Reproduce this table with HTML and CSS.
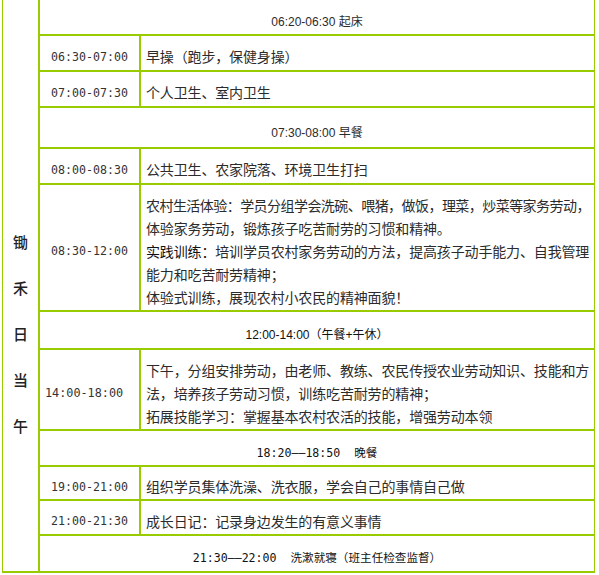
FILE: index.html
```html
<!DOCTYPE html>
<html lang="zh">
<head>
<meta charset="utf-8">
<title>锄禾日当午 日程安排</title>
<link rel="stylesheet" href="styles.css">
</head>
<body>
<div class="schedule">
  <div class="label">锄<br>禾<br>日<br>当<br>午</div>

  <div class="banner sans">06:20-06:30 起床</div>

  <div class="time">06:30-07:00</div>
  <div class="desc">早操（跑步，保健身操）</div>

  <div class="time">07:00-07:30</div>
  <div class="desc">个人卫生、室内卫生</div>

  <div class="banner sans">07:30-08:00 早餐</div>

  <div class="time">08:00-08:30</div>
  <div class="desc">公共卫生、农家院落、环境卫生打扫</div>

  <div class="time">08:30-12:00</div>
  <div class="desc"><div class="lines"><span class="tight">农村生活体验：学员分组学会洗碗、喂猪，做饭，理菜，炒菜等家务劳动，</span><br>体验家务劳动，锻炼孩子吃苦耐劳的习惯和精神。<br><span class="dark">实践训练：</span>培训学员农村家务劳动的方法，提高孩子动手能力、自我管理<br>能力和吃苦耐劳精神；<br>体验式训练，展现农村小农民的精神面貌！</div></div>

  <div class="banner sans dark">12:00-14:00（午餐+午休）</div>

  <div class="time left">14:00-18:00</div>
  <div class="desc"><div class="lines">下午，分组安排劳动，由老师、教练、农民传授农业劳动知识、技能和方<br>法，培养孩子劳动习惯，训练吃苦耐劳的精神；<br>拓展技能学习：掌握基本农村农活的技能，增强劳动本领</div></div>

  <div class="banner mono dark">18:20——18:50&nbsp;&nbsp;晚餐</div>

  <div class="time">19:00-21:00</div>
  <div class="desc">组织学员集体洗澡、洗衣服，学会自己的事情自己做</div>

  <div class="time">21:00-21:30</div>
  <div class="desc">成长日记：记录身边发生的有意义事情</div>

  <div class="banner mono dark">21:30——22:00&nbsp;&nbsp;洗漱就寝（班主任检查监督）</div>
</div>
</body>
</html>
```

FILE: styles.css
```css
html, body {
  margin: 0;
  padding: 0;
  background: #ffffff;
}

body {
  font-family: "Noto Sans CJK SC", "Noto Sans", sans-serif;
  color: #2b2b2b;
}

.schedule {
  display: grid;
  grid-template-columns: 35px 99px 453px;
  grid-template-rows: 34px 34px 34px 39px 34px 125px 36px 79px 34px 32px 33px 35px;
  gap: 2px;
  background: #99cc00;
  padding: 0 1px 2px 1px;
  margin-left: 2px;
  width: max-content;
}

.schedule > div {
  background: #ffffff;
  box-sizing: border-box;
}

.label {
  grid-column: 1;
  grid-row: 1 / span 12;
  padding-top: 219px;
  text-align: center;
  font-size: 15px;
  font-weight: 500;
  line-height: 46px;
  color: #222222;
}

.banner,
.time,
.desc {
  display: flex;
  align-items: center;
  padding-top: 7px;
  white-space: nowrap;
}

.banner {
  grid-column: 2 / 4;
  justify-content: center;
  font-size: 12px;
}

.sans {
  font-family: "Liberation Sans", "Noto Sans CJK SC", sans-serif;
}

.mono {
  font-family: "DejaVu Sans Mono", "Noto Sans CJK SC", monospace;
  font-size: 11.6px;
}

.dark {
  color: #111111;
}

.time {
  grid-column: 2;
  justify-content: center;
  font-family: "DejaVu Sans Mono", monospace;
  font-size: 11.6px;
  color: #333333;
}

.time.left {
  justify-content: flex-start;
  padding-left: 5px;
  font-size: 11.8px;
}

.desc {
  grid-column: 3;
  padding-left: 5px;
  font-size: 14px;
  letter-spacing: -0.15px;
  line-height: 23px;
  overflow: hidden;
}

.lines {
  display: block;
}

.tight {
  letter-spacing: -0.55px;
}
```
